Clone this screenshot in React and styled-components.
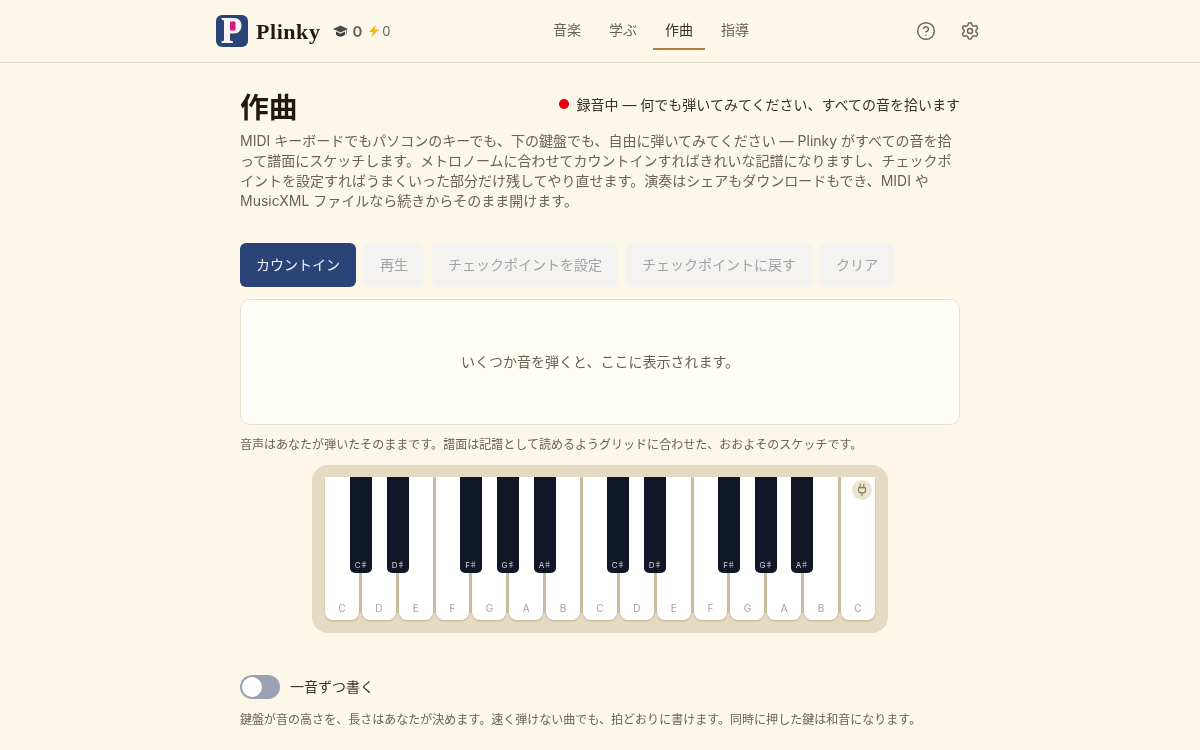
import React from "react";
import styled, { createGlobalStyle } from "styled-components";
import { CircleHelp, Settings, Plug } from "lucide-react";

const Global = createGlobalStyle`
  html, body { margin: 0; padding: 0; background: #fdf7ea; }
  body { font-family: Inter, "Noto Sans CJK JP", sans-serif; color: #1f1a10; height: 750px; overflow: hidden; }
  * { box-sizing: border-box; }
`;

const Page = styled.div`
  will-change: transform;
`;
const Header = styled.header`
  height: 63px;
  border-bottom: 1px solid #e8e0cc;
  display: flex;
  justify-content: center;
`;
const HeaderInner = styled.div`
  width: 768px;
  display: flex;
  align-items: center;
`;
const Brand = styled.div`
  display: flex;
  align-items: center;
  flex: 0 0 325px;
`;
const Wordmark = styled.span`
  font-family: "Liberation Serif", serif;
  font-weight: 700;
  font-size: 22px;
  letter-spacing: 0.55px;
  color: #1f1a10;
  margin-left: 8px;
  position: relative;
  top: 1px;
`;
const Stat = styled.span`
  display: inline-flex;
  align-items: center;
  color: #6b6254;
  font-size: ${p => p.$size}px;
  font-weight: ${p => p.$weight};
  margin-left: ${p => p.$ml}px;
  gap: ${p => p.$gap}px;
`;
const Nav = styled.nav`
  display: flex;
  gap: 4px;
  height: 100%;
  align-items: flex-start;
`;
const NavItem = styled.a`
  width: 52px;
  display: flex;
  align-items: center;
  justify-content: center;
  font-size: 14px;
  padding-top: 10px;
  height: 50px;
  color: ${p => (p.$active ? "#3a3325" : "#6b6254")};
  border-bottom: 2px solid ${p => (p.$active ? "#a9833f" : "transparent")};
`;
const Tools = styled.div`
  display: flex;
  margin-left: auto;
  gap: 24px;
  padding-right: 4px;
  color: #6b6254;
  svg { display: block; }
`;
const Main = styled.main`
  width: 720px;
  margin: 0 auto;
  padding-top: 24px;
`;
const TitleRow = styled.div`
  display: flex;
  justify-content: space-between;
  align-items: center;
  height: 40px;
`;
const Title = styled.h1`
  margin: 2px 0 0;
  font-size: 28.8px;
  font-weight: 700;
  line-height: 40px;
  color: #1f1a10;
`;
const Recording = styled.div`
  display: flex;
  align-items: center;
  gap: 8px;
  font-size: 14px;
  color: #3a3325;
  position: relative;
  top: -3px;
`;
const Dot = styled.span`
  width: 10px;
  height: 10px;
  border-radius: 50%;
  background: #e7000b;
`;
const Lead = styled.p`
  margin: 4px 0 0;
  font-size: 14px;
  line-height: 20px;
  color: #6b6254;
`;
const Actions = styled.div`
  display: flex;
  gap: 8px;
  margin-top: 32px;
`;
const Button = styled.button`
  height: 44px;
  padding: 0 16px 2px;
  border: 0;
  border-radius: 6px;
  font: 400 14px Inter, "Noto Sans CJK JP", sans-serif;
  background: ${p => (p.disabled ? "#f4f3f1" : "#2a4478")};
  color: ${p => (p.disabled ? "#a3a3a3" : "#f5f3ee")};
`;
const Score = styled.div`
  margin-top: 12px;
  height: 126px;
  padding-bottom: 2px;
  border: 1px solid #e8e0cc;
  border-radius: 10px;
  background: #fffdf7;
  display: flex;
  align-items: center;
  justify-content: center;
  font-size: 14px;
  color: #6b6254;
`;
const Caption = styled.p`
  margin: ${p => p.$mt}px 0 0;
  font-size: 12px;
  line-height: 16px;
  letter-spacing: 0.02px;
  color: #6b6254;
`;
const KeyboardWrap = styled.div`
  display: flex;
  justify-content: center;
  margin-top: 12px;
`;
const Keyboard = styled.div`
  position: relative;
  width: 576px;
  height: 168px;
  padding: 12px 13px;
  background: #e4dbc2;
  border-radius: 16px;
`;
const WhiteKey = styled.div`
  flex: 1;
  height: 143px;
  background: #fff;
  border-radius: 0 0 8px 8px;
  box-shadow: 0 1px 2px rgba(120, 100, 60, .35);
  display: flex;
  align-items: flex-end;
  justify-content: center;
  padding-bottom: 6px;
  font-size: 10px;
  line-height: 12px;
  color: #a1a1a1;
`;
const Tray = styled.div`
  position: absolute;
  left: 13px;
  top: 12px;
  width: 550px;
  height: 136px;
  background: #cfc4a6;
  z-index: 0;
`;
const KeysLayer = styled.div`
  position: relative;
  z-index: 1;
  display: flex;
  gap: 3px;
  width: 550px;
`;
const BlackKey = styled.div`
  position: absolute;
  top: 12px;
  width: 22px;
  height: 96px;
  z-index: 2;
  background: #101828;
  border-radius: 0 0 5px 5px;
  display: flex;
  align-items: flex-end;
  justify-content: center;
  padding-bottom: 2px;
  font-size: 8px;
  line-height: 11px;
  letter-spacing: -0.6px;
  color: #d4d4d4;
`;
const PlugBadge = styled.div`
  position: absolute;
  z-index: 3;
  top: 15px;
  right: 16px;
  width: 20px;
  height: 20px;
  border-radius: 50%;
  background: #ebe4d0;
  color: #8a7a55;
  display: flex;
  align-items: center;
  justify-content: center;
`;
const ToggleRow = styled.div`
  display: flex;
  align-items: center;
  gap: 10px;
  margin-top: 42px;
  font-size: 14px;
  line-height: 22px;
  color: #3a3325;
`;
const Track = styled.div`
  width: 40px;
  height: 24px;
  border-radius: 12px;
  background: #99a1b3;
  padding: 2px;
`;
const Knob = styled.div`
  width: 20px;
  height: 20px;
  border-radius: 50%;
  background: #fff;
`;
const ToggleLabel = styled.span`
  display: block;
`;

const Logo = () => (
  <svg width="32" height="32" viewBox="0 0 32 32">
    <rect width="32" height="32" rx="6" fill="#2a4478" />
    <path d="M5.500 3H18c4.700 0 7.500 3 7.500 7.500S22.700 18.500 18 18.500h-4v7l3 1V28H5.500v-1.500l2.500-1V5.500l-2.500-1z" fill="#f7f3ee" />
    <rect x="14" y="6.500" width="5.500" height="9" rx="1" fill="#d6157e" />
  </svg>
);
const Cap = () => (
  <svg width="17" height="14" viewBox="0 0 16 14">
    <path d="M8 1.500 0.500 5 8 8.500 15.500 5z" fill="#4b4b4b" />
    <path d="M3.500 7.500v3c1 1.500 3 2 4.500 2s3.500-.5 4.500-2v-3L8 9.700z" fill="#3d3d3d" />
    <path d="M14 6v4.500" stroke="#8a8a8a" strokeWidth="1" />
  </svg>
);
const Bolt = () => (
  <svg width="14" height="14" viewBox="0 0 12 14">
    <path d="M8 .5 1 8h4l-2 5.500L11 5.500H6.700z" fill="#f6b21b" />
  </svg>
);

const whites = ["C","D","E","F","G","A","B","C","D","E","F","G","A","B","C"];
const blacks = [["C♯",38],["D♯",75],["F♯",148],["G♯",185],["A♯",222],["C♯",295],["D♯",332],["F♯",406],["G♯",443],["A♯",479]];

export default function App() {
  return (
    <Page>
      <Global />
      <Header>
        <HeaderInner>
          <Brand>
            <Logo />
            <Wordmark>Plinky</Wordmark>
            <Stat $size={15} $weight={600} $ml={12} $gap={3}><Cap />0</Stat>
            <Stat $size={13} $weight={400} $ml={5} $gap={1}><Bolt />0</Stat>
          </Brand>
          <Nav>
            <NavItem>音楽</NavItem>
            <NavItem>学ぶ</NavItem>
            <NavItem $active>作曲</NavItem>
            <NavItem>指導</NavItem>
          </Nav>
          <Tools>
            <CircleHelp size={20} strokeWidth={1.75} />
            <Settings size={20} strokeWidth={1.75} />
          </Tools>
        </HeaderInner>
      </Header>
      <Main>
        <TitleRow>
          <Title>作曲</Title>
          <Recording><Dot />録音中 — 何でも弾いてみてください、すべての音を拾います</Recording>
        </TitleRow>
        <Lead>
          MIDI キーボードでもパソコンのキーでも、下の鍵盤でも、自由に弾いてみてください — Plinky がすべての音を拾って譜面にスケッチします。メトロノームに合わせてカウントインすればきれいな記譜になりますし、チェックポイントを設定すればうまくいった部分だけ残してやり直せます。演奏はシェアもダウンロードもでき、MIDI や MusicXML ファイルなら続きからそのまま開けます。
        </Lead>
        <Actions>
          <Button>カウントイン</Button>
          <Button disabled>再生</Button>
          <Button disabled>チェックポイントを設定</Button>
          <Button disabled>チェックポイントに戻す</Button>
          <Button disabled>クリア</Button>
        </Actions>
        <Score>いくつか音を弾くと、ここに表示されます。</Score>
        <Caption $mt={12}>音声はあなたが弾いたそのままです。譜面は記譜として読めるようグリッドに合わせた、おおよそのスケッチです。</Caption>
        <KeyboardWrap>
          <Keyboard>
            <Tray />
            <KeysLayer>
              {whites.map((n, i) => <WhiteKey key={i}>{n}</WhiteKey>)}
            </KeysLayer>
            {blacks.map(([n, x], i) => (
              <BlackKey key={i} style={{ left: x }}>{n}</BlackKey>
            ))}
            <PlugBadge><Plug size={14} strokeWidth={2} /></PlugBadge>
          </Keyboard>
        </KeyboardWrap>
        <ToggleRow>
          <Track><Knob /></Track>
          <ToggleLabel>一音ずつ書く</ToggleLabel>
        </ToggleRow>
        <Caption $mt={13}>鍵盤が音の高さを、長さはあなたが決めます。速く弾けない曲でも、拍どおりに書けます。同時に押した鍵は和音になります。</Caption>
      </Main>
    </Page>
  );
}
